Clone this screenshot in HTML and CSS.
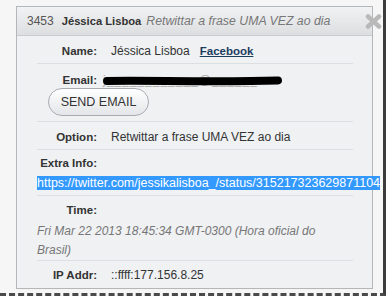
FILE: index.html
```html
<!DOCTYPE html>
<html lang="en">
<head>
    <meta charset="UTF-8">
    <title>Entry 3453</title>
    <link rel="stylesheet" href="styles.css">
</head>
<body>

    <div class="frame">
        <div class="dialog">
            <div class="dialog-head">
                <span class="entry-id">3453</span>
                <span class="entry-name">Jéssica Lisboa</span>
                <span class="entry-option">Retwittar a frase UMA VEZ ao dia</span>
                <a class="close-btn" href="#">
                    <svg width="17" height="15" viewBox="0 0 17 15">
                        <path d="M3 2.5 L14 12.5 M14 2.5 L3 12.5" stroke="#b9b9b9" stroke-width="4.5" stroke-linecap="round"/>
                    </svg>
                </a>
            </div>

            <div class="dialog-body">
                <div class="row">
                    <span class="label">Name:</span>
                    <span class="value">Jéssica Lisboa<a class="fb-link" href="#">Facebook</a></span>
                </div>

                <div class="row row-email">
                    <div class="line">
                        <span class="label">Email:</span>
                        <span class="value">
                            <span class="hidden-mail">j____________@______</span>
                            <svg class="scribble" width="180" height="12" viewBox="0 0 180 12">
                                <path d="M4 6 C 40 5, 110 7.5, 175 5.5" stroke="#000" stroke-width="8" stroke-linecap="round" fill="none"/>
                            </svg>
                        </span>
                    </div>
                    <button class="send-btn">SEND EMAIL</button>
                </div>

                <div class="row">
                    <span class="label">Option:</span>
                    <span class="value">Retwittar a frase UMA VEZ ao dia</span>
                </div>

                <div class="row row-stack">
                    <span class="label">Extra Info:</span>
                    <div class="extra"><span class="extra-link">https://twitter.com/jessikalisboa_/status/315217323629871104</span></div>
                </div>

                <div class="row row-stack row-time">
                    <span class="label">Time:</span>
                    <div class="time">Fri Mar 22 2013 18:45:34 GMT-0300 (Hora oficial do Brasil)</div>
                </div>

                <div class="row row-last">
                    <span class="label">IP Addr:</span>
                    <span class="value">::ffff:177.156.8.25</span>
                </div>
            </div>
        </div>
    </div>

</body>
</html>
```

FILE: styles.css
```css
body {
    margin: 0;
    background: #ffffff;
    font-family: "Liberation Sans", Arial, sans-serif;
    color: #333;
}
.frame {
    width: 386px;
    height: 296px;
    box-sizing: border-box;
    padding: 6px 0 0 16px;
    background: #f6f6f6;
    border-right: 3px solid #3c3c3c;
    border-bottom: 3px dashed #4a4a4a;
}
.dialog {
    position: relative;
    width: 357px;
    box-sizing: border-box;
    border: 1px solid #b4b7ba;
    background: #eff1f3;
}
.dialog-head {
    height: 28px;
    border-bottom: 1px solid #c9cccf;
    background: linear-gradient(#f1f2f3, #dcdee0);
    display: flex;
    align-items: center;
    padding-left: 10px;
    white-space: nowrap;
}
.entry-id {
    font-size: 12px;
    color: #555;
    margin-right: 8px;
}
.entry-name {
    font-size: 11.2px;
    font-weight: bold;
    color: #333;
    margin-right: 5px;
}
.entry-option {
    font-size: 12.3px;
    font-style: italic;
    color: #777;
}
.close-btn {
    position: absolute;
    top: 7px;
    right: -10px;
    width: 17px;
    height: 15px;
    display: block;
}
.close-btn svg {
    display: block;
}
.dialog-body {
    padding: 0 19px 0 20px;
}
.row {
    display: flex;
    align-items: center;
    padding: 8px 0 5px;
    border-bottom: 1px solid #dcdfe2;
    line-height: 14px;
}
.label {
    width: 60px;
    flex: none;
    text-align: right;
    font-size: 11.5px;
    font-weight: bold;
    color: #333;
}
.value {
    margin-left: 14px;
    font-size: 12px;
    color: #333;
    white-space: nowrap;
}
.fb-link {
    margin-left: 10px;
    font-size: 11.5px;
    font-weight: bold;
    color: #1d3d5f;
    text-decoration: underline;
}
.row-email {
    display: block;
    padding: 9px 0 5px;
}
.row-email .line {
    display: flex;
    align-items: center;
}
.row-email .value {
    position: relative;
    margin-left: 6px;
    height: 14px;
}
.hidden-mail {
    color: #aaa;
    letter-spacing: 1px;
}
.scribble {
    position: absolute;
    left: 0;
    top: 2px;
}
.send-btn {
    display: block;
    margin: 1px 0 0 11px;
    width: 101px;
    height: 28px;
    border: 1px solid #a8acb1;
    border-radius: 14px;
    background: linear-gradient(#ffffff, #e3e5e8);
    font-family: "Liberation Sans", Arial, sans-serif;
    font-size: 12.5px;
    color: #333;
    padding: 0;
}
.row-stack {
    display: block;
    padding: 6px 0 5px;
}
.row-stack .label {
    display: block;
}
.extra {
    margin-top: 5px;
    white-space: nowrap;
    line-height: 14px;
}
.extra-link {
    font-size: 12.5px;
    background: #3399ff;
    color: #fff;
}
.row-time {
    padding: 7px 0 0;
}
.time {
    width: 295px;
    margin-top: 5px;
    font-size: 12px;
    font-style: italic;
    color: #777;
    line-height: 19px;
}
.row-last {
    border-bottom: none;
    padding: 7px 0 6px;
}
```
